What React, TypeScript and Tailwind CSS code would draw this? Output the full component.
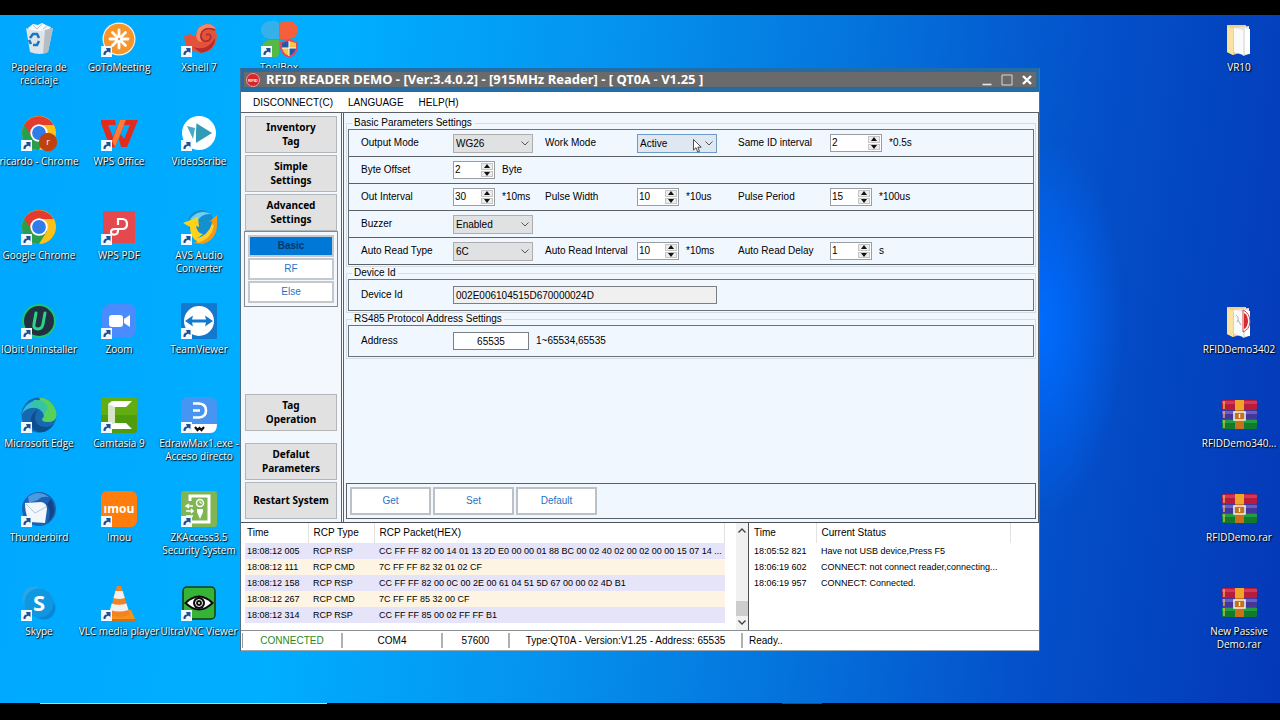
import { useState } from "react";
import type { ReactNode } from "react";

/* ---------- desktop icon drawings, all on a 36 x 36 grid ---------- */

const RecycleBin = () => (
  <>
    <path d="M7 7 L12 3 L17 4 L21 2 L27 5 L30 6 L28 10 L8 10Z" fill="#f5f7f8" />
    <path d="M12 4 L16 8 L21 3 M22 8 L26 5" stroke="#b9c2c8" fill="none" />
    <path d="M5 7 L9 31 Q19 35 27 31 L32 7 L26 9 L18 10 L10 9Z" fill="#dfe4e8" />
    <path d="M24 9 L32 7 L27 31 L22 33Z" fill="#b5bcc2" />
    <path d="M9 17 l3 -4 h4 l2 4 M18 20 l-2 4 h-4 M10 23 l-2 -4" stroke="#1778c8" strokeWidth="2.6" fill="none" />
  </>
);

const GoToMeeting = () => (
  <>
    <circle cx="18" cy="18" r="16.5" fill="#f9f3e6" />
    <circle cx="18" cy="18" r="15.3" fill="#f7952a" />
    <g stroke="#fff" strokeWidth="2.8" strokeLinecap="round">
      <path d="M18 9v6M18 21v6M9 18h6M21 18h6M11.500 11.500l4 4M20.500 20.500l4 4M24.500 11.500l-4 4M15.500 20.500l-4 4" />
    </g>
    <circle cx="18" cy="18" r="2.4" fill="#fff" />
    <circle cx="18" cy="18" r="1.2" fill="#f7952a" />
  </>
);

const Xshell = () => (
  <>
    <path d="M3 15 L9 13 Q13 16 15 14 Q16 4 26 3 Q32 3 35 8 Q34 9 34 12 L36 13 Q36 25 28 30 Q19 34 10 29 Q4 27 3 15Z" fill="#e4523b" />
    <path d="M15 15 Q16 4 26 3 Q32 3 35 8 Q26 5 21 10 Q17 15 21 21 Q16 21 15 15Z" fill="#f08a62" />
    <path d="M34 9 Q25 5 21 11 Q18 17 23 20 Q29 21 30 16 Q29 12 25 14" fill="none" stroke="#a92d2c" strokeWidth="1.500" />
    <path d="M12 26 Q26 31 34 17 Q34 29 20 32Z" fill="#b82c2c" />
  </>
);

const ToolBox = () => (
  <>
    <path d="M9 0 h5 q4 0 4 4 v14 h-9 a9 9 0 0 1 0 -18z" fill="#35b1ea" />
    <path d="M28 0 h-5 q-4 0 -4 4 v14 h9 a9 9 0 0 0 0 -18z" fill="#f4603c" />
    <path d="M9 36 h5 q4 0 4 -4 v-13 h-9 a8.500 8.500 0 0 0 0 17z" fill="#55b945" />
    <path d="M28 18 l9 3 v6 q-1 7 -9 10 q-8 -3 -9 -10 v-6z" fill="#e04a60" />
    <path d="M28 20 l-7 2 v5 h7z M28 27 h7 q-1 5 -7 8z" fill="#2159a8" />
    <path d="M28 20 l7 2 v5 h-7z M28 27 h-7 q1 5 7 8z" fill="#f8c443" />
    <path d="M28 20v15M21 27h14" stroke="#fff" />
  </>
);

const ChromeMark = () => (
  <>
    <circle cx="18" cy="18" r="17" fill="#fbc116" />
    <path d="M18 18 L3.300 9.500 A17 17 0 0 0 18 35 L26 22Z" fill="#2a9e4b" />
    <path d="M18 10 H32.700 A17 17 0 0 0 3.300 9.500 L11 22Z" fill="#e33b2e" />
    <circle cx="18" cy="18" r="8.700" fill="#fff" />
    <circle cx="18" cy="18" r="6.900" fill="#2f7de9" />
  </>
);

const ChromeProfile = () => (
  <>
    <ChromeMark />
    <circle cx="27" cy="27" r="9.200" fill="#c0410b" />
    <text x="27" y="30" fontSize="9" textAnchor="middle" fill="#fff" fontFamily="Open Sans, sans-serif">r</text>
  </>
);

const WpsOffice = () => (
  <>
    <path d="M0 5 H14 L15 10 H7 L12 22 L19 5 H25 L14 32 H9 L0 8Z" fill="#e22a1d" />
    <path d="M19 5 H25 L14 32 L11 26Z" fill="#ff7a35" />
    <path d="M25 5 H37 L26 32 H20 L18 24 L20 19 L23 24 L29 10 H23Z" fill="#e22a1d" />
  </>
);

const VideoScribe = () => (
  <>
    <circle cx="18" cy="18" r="17" fill="#fff" />
    <path d="M15 8 L31 18 L15 28Z" fill="#2f9bb5" />
    <path d="M6 11 L14 13 L12 24Z" fill="#46abc0" />
    <path d="M15 8 L14 25 L12 29" stroke="#fff" fill="none" />
  </>
);

const WpsPdf = () => (
  <>
    <rect x="2" y="2" width="32" height="32" fill="#e5484d" />
    <path d="M17 16 V10 h4 q5 0 5 5 t-5 5 h-7 q-4 0 -4 3 q0 3 4 2.500 q3 -.5 3 -4 v-2" stroke="#fff" strokeWidth="2.200" fill="none" />
  </>
);

const AvsAudio = () => (
  <>
    <circle cx="20" cy="14" r="13" fill="#1390cf" />
    <path d="M9 10 Q18 -1 30 5 Q20 4 15 14Z" fill="#6fd0f5" />
    <path d="M2 14 L17 8 L18 18 L15 17 Q16 24 22 25 L14 31 Q9 26 9 18Z" fill="#ffd21a" />
    <path d="M12 34 Q29 30 31 12 L28 13 L36 6 L36 13 Q37 30 22 35Z" fill="#f59a14" />
    <path d="M14 30 Q27 27 31 15 L33 17 Q30 30 17 34Z" fill="#ffcf2b" />
  </>
);

const IObit = () => (
  <>
    <circle cx="18" cy="18" r="17" fill="#1fc47c" />
    <circle cx="18" cy="18" r="15" fill="#23303f" />
    <path d="M15 10 L13 21 Q12 26 17 26 Q21 26 22 21 L24 10" stroke="#28d58a" strokeWidth="3" fill="none" strokeLinecap="round" />
  </>
);

const ZoomMark = () => (
  <>
    <rect x="1" y="1" width="34" height="34" rx="8" fill="#4a8cff" />
    <rect x="8" y="12" width="14" height="12" rx="3" fill="#fff" />
    <path d="M23 16 L29 12 V24 L23 20Z" fill="#fff" />
  </>
);

const TeamViewer = () => (
  <>
    <rect width="36" height="36" rx="1" fill="#1279cf" />
    <circle cx="18" cy="18" r="15" fill="#fff" />
    <path d="M4 18 L12 12.500 L11 16.500 H25 L24 12.500 L32 18 L24 23.500 L25 19.500 H11 L12 23.500Z" fill="#1279cf" />
  </>
);

const Edge = () => (
  <>
    <circle cx="18" cy="18" r="17.500" fill="#1668b0" />
    <path d="M1 17 A17.500 17.500 0 0 1 35.500 18 Q35 25 27 25 Q21 25 21 22 Q24 20 22 16 Q18 10 10 11 Q4 12 1 17Z" fill="#35b9d8" />
    <path d="M18 .5 A17.500 17.500 0 0 1 35.500 18 Q35 25 27 25 Q21 25 21 22 Q24 20 23 16 Q21 6 18 .5Z" fill="#55d15c" />
    <path d="M13 3 Q24 2 27 11 L23 17 Q20 9 9 11Z" fill="#37c4a4" />
    <path d="M14 20 Q14 30 26 30 Q30 30 33 27 Q26 37 17 35 Q9 32 10 22 Q11 15 17 13 Q14 16 14 20Z" fill="#0b4f8f" />
  </>
);

const Camtasia = () => (
  <>
    <rect width="36" height="36" rx="3" fill="#4f9c0c" />
    <path d="M0 3 Q0 0 3 0 H33 Q36 0 36 3 V18 H0Z" fill="#62ad12" />
    <path d="M7 7 L11 4 H31 L25 10 H14 V26 H25 L31 32 H11 L7 29Z" fill="#fff" />
    <path d="M7 7 L14 10 V26 L7 29Z" fill="#d8e6c8" />
  </>
);

const EdrawMax = () => (
  <>
    <rect width="36" height="36" rx="7" fill="#4795f2" />
    <path d="M0 27 L36 27 Q36 36 29 36 H7 Q0 36 0 29Z" fill="#fff" />
    <path d="M12 6.500 H18 Q25 7 25 13.500 Q25 20 18 20.500 H12 M12 13.500 H19" stroke="#fff" strokeWidth="2.600" fill="none" />
    <path d="M14 30 l2.500 3 l2 -2 l2 2 l2.500 -3" stroke="#111" strokeWidth="2.200" fill="none" />
  </>
);

const Thunderbird = () => (
  <>
    <circle cx="18" cy="18" r="17" fill="#1c62b4" />
    <path d="M7 6 Q17 -2 28 6 Q20 5 17 9 L8 12Z" fill="#4b9bdd" />
    <path d="M30 8 Q38 21 27 31 Q31 22 26 13Z" fill="#134488" />
    <path d="M4 12 L20 11 Q26 12 26 18 L24 32 L9 31 Q4 24 4 12Z" fill="#f3f7fb" />
    <path d="M5 13 L14 22 L25 16" stroke="#b4c5d8" fill="none" />
  </>
);

const Imou = () => (
  <>
    <rect width="36" height="36" rx="6" fill="#ff7d0c" />
    <text x="18" y="22" fontSize="12" fontWeight="700" textAnchor="middle" fill="#fff" fontFamily="Open Sans, sans-serif">ımou</text>
  </>
);

const ZkAccess = () => (
  <>
    <rect width="36" height="36" rx="3" fill="#7fb552" />
    <path d="M9 10 V5 H28 V31 H9 V27" stroke="#fff" strokeWidth="3" fill="none" />
    <circle cx="19" cy="12" r="3.500" stroke="#fff" strokeWidth="1.500" fill="none" />
    <path d="M19 10v2h2" stroke="#fff" fill="none" />
    <path d="M16 18 h6 v3 l-3 7 l-3 -7z" fill="#fff" />
    <path d="M12 15 H5 M8 13l-3 2 3 2 M5 20 h7 M10 18l2 2 -2 2 M12 25 H5" stroke="#fff" strokeWidth="1.500" fill="none" />
  </>
);

const Skype = () => (
  <>
    <circle cx="13" cy="13" r="11.500" fill="#2aa5e8" />
    <circle cx="23" cy="23" r="11.500" fill="#0a86d8" />
    <circle cx="18" cy="18" r="14.500" fill="#0f97e2" />
    <text x="18" y="26" fontSize="22" fontWeight="700" textAnchor="middle" fill="#fff" fontFamily="Open Sans, sans-serif">S</text>
  </>
);

const Vlc = () => (
  <>
    <path d="M6 25 H30 L34 34 H3Z" fill="#f6921e" />
    <path d="M3 34 H34 V36 H3Z" fill="#d5700a" />
    <path d="M16 1 H20 L29 30 Q18 34 8 30Z" fill="#f4831f" />
    <path d="M14.400 6 H21.600 L23.800 13 Q18 15 12.400 13Z" fill="#eef0f1" />
    <path d="M10.700 18.500 Q18 21 25.400 18.500 L27.500 25 Q18 28 9 25Z" fill="#eef0f1" />
  </>
);

const UltraVnc = () => (
  <>
    <rect x="2" y="2" width="32" height="32" rx="4" fill="#35b435" stroke="#143c14" strokeWidth="1.500" />
    <path d="M3 18 Q18 3 33 18 Q18 33 3 18Z" fill="#0b0b0b" />
    <path d="M6 18 Q18 7 30 18 Q18 29 6 18Z" fill="#fff" />
    <circle cx="18" cy="18" r="6" fill="#0b0b0b" />
    <circle cx="18" cy="18" r="3.500" fill="none" stroke="#fff" />
    <circle cx="18" cy="18" r="1" fill="#fff" />
  </>
);

const Folder = () => (
  <>
    <path d="M6 4 H25 V30 L12 34 L6 31Z" fill="#f3d083" />
    <path d="M12 7 L28 5 V33 L22 35Z" fill="#e3e5e6" />
    <path d="M24 7 L29 8 V33 H24Z" fill="#fff" />
    <path d="M13 7 L22 9 V34 L13 31Z" fill="#f9fafa" />
    <path d="M6 5 L12 8 V34 L6 31Z" fill="#fbe2a0" />
  </>
);

const FolderDisc = () => (
  <>
    <Folder />
    <path d="M22 7 Q29 10 29 19 Q28 27 22 29Z" fill="#fff" stroke="#d8474c" />
    <path d="M23 10 Q27 12 27 19 Q26 25 23 26Z" fill="#d42a35" />
    <path d="M15 12 q4 3 1 7 M17 17 l3 5" stroke="#aab0b5" fill="none" />
  </>
);

const WinRar = () => (
  <>
    <rect x="1" y="3" width="35" height="10" rx="1.500" fill="#b81c3a" />
    <rect x="1" y="4" width="35" height="3" fill="#d2385a" />
    <rect x="1" y="13" width="35" height="9" rx="1.500" fill="#43379a" />
    <rect x="1" y="14" width="35" height="3" fill="#6a5ec4" />
    <rect x="1" y="22" width="35" height="10" rx="1.500" fill="#127a2c" />
    <rect x="1" y="23" width="35" height="3" fill="#249c42" />
    <path d="M3 4v8M3 14v7M3 23v8" stroke="#f1c95a" strokeWidth="1.200" />
    <rect x="14" y="3" width="9" height="11" fill="#eda52a" />
    <rect x="14" y="13" width="9" height="19" fill="#c9701a" />
    <path d="M13 15 H24 V23 H13Z" fill="none" stroke="#f5f2e6" strokeWidth="1.600" />
    <path d="M18.500 17 V21" stroke="#f5f2e6" strokeWidth="1.400" />
  </>
);

type DesktopItem = { label: string; art: ReactNode; shortcut?: boolean; place: string };

const leftItems: DesktopItem[] = [
  { label: "Papelera de\nreciclaje", art: <RecycleBin />, place: "col-start-1 row-start-1" },
  { label: "GoToMeeting", art: <GoToMeeting />, shortcut: true, place: "col-start-2 row-start-1" },
  { label: "Xshell 7", art: <Xshell />, shortcut: true, place: "col-start-3 row-start-1" },
  { label: "ToolBox", art: <ToolBox />, shortcut: true, place: "col-start-4 row-start-1" },
  { label: "ricardo - Chrome", art: <ChromeProfile />, shortcut: true, place: "col-start-1 row-start-2" },
  { label: "WPS Office", art: <WpsOffice />, shortcut: true, place: "col-start-2 row-start-2" },
  { label: "VideoScribe", art: <VideoScribe />, shortcut: true, place: "col-start-3 row-start-2" },
  { label: "Google Chrome", art: <ChromeMark />, shortcut: true, place: "col-start-1 row-start-3" },
  { label: "WPS PDF", art: <WpsPdf />, shortcut: true, place: "col-start-2 row-start-3" },
  { label: "AVS Audio\nConverter", art: <AvsAudio />, shortcut: true, place: "col-start-3 row-start-3" },
  { label: "IObit Uninstaller", art: <IObit />, shortcut: true, place: "col-start-1 row-start-4" },
  { label: "Zoom", art: <ZoomMark />, shortcut: true, place: "col-start-2 row-start-4" },
  { label: "TeamViewer", art: <TeamViewer />, shortcut: true, place: "col-start-3 row-start-4" },
  { label: "Microsoft Edge", art: <Edge />, shortcut: true, place: "col-start-1 row-start-5" },
  { label: "Camtasia 9", art: <Camtasia />, shortcut: true, place: "col-start-2 row-start-5" },
  { label: "EdrawMax1.exe -\nAcceso directo", art: <EdrawMax />, shortcut: true, place: "col-start-3 row-start-5" },
  { label: "Thunderbird", art: <Thunderbird />, shortcut: true, place: "col-start-1 row-start-6" },
  { label: "Imou", art: <Imou />, shortcut: true, place: "col-start-2 row-start-6" },
  { label: "ZKAccess3.5\nSecurity System", art: <ZkAccess />, shortcut: true, place: "col-start-3 row-start-6" },
  { label: "Skype", art: <Skype />, shortcut: true, place: "col-start-1 row-start-7" },
  { label: "VLC media player", art: <Vlc />, shortcut: true, place: "col-start-2 row-start-7" },
  { label: "UltraVNC Viewer", art: <UltraVnc />, shortcut: true, place: "col-start-3 row-start-7" },
];

const rightItems: DesktopItem[] = [
  { label: "VR10", art: <Folder />, place: "row-start-1" },
  { label: "RFIDDemo3402", art: <FolderDisc />, place: "row-start-4" },
  { label: "RFIDDemo340...", art: <WinRar />, place: "row-start-5" },
  { label: "RFIDDemo.rar", art: <WinRar />, place: "row-start-6" },
  { label: "New Passive\nDemo.rar", art: <WinRar />, place: "row-start-7" },
];

function DesktopIcon({ label, art, shortcut, place }: DesktopItem) {
  return (
    <button type="button" className={`flex flex-col items-center gap-1 ${place}`}>
      <svg viewBox="0 0 36 36" className="h-9 w-9 shrink-0 overflow-visible" aria-hidden="true">
        {art}
        {shortcut && (
          <g>
            <rect x="0" y="25" width="11" height="11" fill="#f4f7fa" />
            <path d="M2.500 34 Q2 29.500 6 29.500 L5 27 L9.500 27 L9.500 32 L7.700 30.700 Q4.500 31 4.500 34Z" fill="#1d4f95" />
          </g>
        )}
      </svg>
      <span className="text-center font-['Open_Sans',sans-serif] text-[10px] leading-[13px] whitespace-pre text-white [text-shadow:1px_1px_1px_#000,0_0_2px_#000c]">
        {label}
      </span>
    </button>
  );
}

/* ---------- form controls ---------- */

function Dropdown({ id, value, active }: { id: string; value: string; active?: boolean }) {
  return (
    <div className="relative w-20">
      <select
        id={id}
        defaultValue={value}
        className={`block h-[19px] w-full appearance-none border px-0.5 text-[10px] leading-[17px] ${
          active ? "border-[#6f9bc9] bg-[#dfe7f1]" : "border-[#adadad] bg-[#e0e1e3]"
        }`}
      >
        <option>{value}</option>
      </select>
      <svg viewBox="0 0 8 5" className="pointer-events-none absolute top-[7px] right-1 h-[5px] w-2" aria-hidden="true">
        <path d="M.5 .5 L4 4 L7.500 .5" fill="none" stroke="#555" />
      </svg>
    </div>
  );
}

function Spinner({ id, initial, wide }: { id: string; initial: number; wide?: boolean }) {
  const [value, setValue] = useState(initial);
  const step = "flex flex-1 items-center justify-center border border-[#c6c6c6] bg-[#ececec]";
  return (
    <div className={`flex h-[18px] border border-[#9a9da1] bg-white ${wide ? "w-[52px]" : "w-[42px]"}`}>
      <input
        id={id}
        type="text"
        inputMode="numeric"
        value={value}
        onChange={(e) => setValue(Number(e.target.value) || 0)}
        className="h-4 w-0 min-w-0 flex-1 pl-px text-[10px] leading-4 outline-none"
      />
      <div className="flex w-[13px] flex-col gap-px bg-white py-px pr-px">
        <button type="button" aria-label="Increase" onClick={() => setValue(value + 1)} className={step}>
          <svg viewBox="0 0 6 4" className="h-1 w-1.5" aria-hidden="true"><path d="M3 0 L6 4 H0Z" fill="#111" /></svg>
        </button>
        <button type="button" aria-label="Decrease" onClick={() => setValue(Math.max(0, value - 1))} className={step}>
          <svg viewBox="0 0 6 4" className="h-1 w-1.5" aria-hidden="true"><path d="M0 0 H6 L3 4Z" fill="#111" /></svg>
        </button>
      </div>
    </div>
  );
}

function Field({ id, label, unit, children }: { id: string; label: string; unit?: string; children: ReactNode }) {
  return (
    <div className="flex items-center">
      <label htmlFor={id} className="w-[92px] shrink-0">{label}</label>
      {children}
      {unit && <span className="pl-[7px]">{unit}</span>}
    </div>
  );
}

function Row({ children }: { children: ReactNode }) {
  return (
    <div className="grid h-[27px] grid-cols-[184px_193px_1fr] items-center border-b border-[#5c6166] pl-3">{children}</div>
  );
}

function Group({ title, children }: { title: string; children: ReactNode }) {
  return (
    <fieldset className="min-w-0 border border-[#d3dde6] px-px pb-px">
      <legend className="ml-1 px-0.5 leading-3">{title}</legend>
      <div className="border border-b-0 border-[#6d7276]">{children}</div>
    </fieldset>
  );
}

const sideButton =
  "flex h-[37px] shrink-0 items-center justify-center border border-[#b3b6b9] bg-[#e1e1e1] pb-0.5 text-center font-['Noto_Sans',sans-serif] text-[10px] leading-[14px] font-bold whitespace-pre text-black";
const subButton = "h-[22px] border-2 border-[#c5c9ce] text-[10px] leading-4";
const actionButton = "h-7 w-[81px] border-2 border-[#bcc1c6] bg-white text-[10px] text-[#1f74c4]";

const packets = [
  ["18:08:12 005", "RCP RSP", "CC FF FF 82 00 14 01 13 2D E0 00 00 01 88 BC 00 02 40 02 00 02 00 00 15 07 14 ..."],
  ["18:08:12 111", "RCP CMD", "7C FF FF 82 32 01 02 CF"],
  ["18:08:12 158", "RCP RSP", "CC FF FF 82 00 0C 00 2E 00 61 04 51 5D 67 00 00 02 4D B1"],
  ["18:08:12 267", "RCP CMD", "7C FF FF 85 32 00 CF"],
  ["18:08:12 314", "RCP RSP", "CC FF FF 85 00 02 FF FF B1"],
];

const statuses = [
  ["18:05:52 821", "Have not USB device,Press F5"],
  ["18:06:19 602", "CONNECT: not connect reader,connecting..."],
  ["18:06:19 957", "CONNECT: Connected."],
];

function ReaderWindow() {
  return (
    <section className="absolute top-[53px] left-60 flex w-[800px] flex-col border-x border-[#4c6f8a] bg-white font-['Liberation_Sans',sans-serif] text-[10px] leading-[14px] text-black">
      <header className="flex h-6 bg-[#236ca6] px-[3px] pt-1 pb-[5px]">
        <div className="flex flex-1 items-center bg-[#6a6a6a] pl-0.5">
          <svg viewBox="0 0 14 14" className="h-3.5 w-3.5" aria-hidden="true">
            <circle cx="7" cy="7" r="6.500" fill="#d9262c" stroke="#f19a96" />
            <text x="7" y="8.500" fontSize="4" fontWeight="700" textAnchor="middle" fill="#fff">RFID</text>
          </svg>
          <h1 className="flex-1 pl-1.5 font-['Noto_Sans',sans-serif] text-[13px] leading-[15px] font-bold whitespace-nowrap text-white">
            RFID READER DEMO - [Ver:3.4.0.2] - [915MHz Reader] - [ QT0A - V1.25 ]
          </h1>
          <div className="flex gap-1.5 pr-0.5">
            <button type="button" aria-label="Minimize">
              <svg viewBox="0 0 14 14" className="h-3.5 w-3.5"><path d="M2.500 11.500h9" stroke="#e8e8e8" strokeWidth="1.600" /></svg>
            </button>
            <button type="button" aria-label="Maximize">
              <svg viewBox="0 0 14 14" className="h-3.5 w-3.5"><path d="M2 2h10v10H2z" stroke="#d8d8d8" fill="none" /></svg>
            </button>
            <button type="button" aria-label="Close">
              <svg viewBox="0 0 14 14" className="h-3.5 w-3.5"><path d="M3 3l8 8M11 3l-8 8" stroke="#fff" strokeWidth="2.400" /></svg>
            </button>
          </div>
        </div>
      </header>

      <nav className="flex h-[21px] items-center gap-[15px] border-b border-[#5c6166] px-3 pt-0.5">
        <button type="button">DISCONNECT(C)</button>
        <button type="button">LANGUAGE</button>
        <button type="button">HELP(H)</button>
      </nav>

      <div className="flex h-[410px] border-b border-[#4d5256]">
        <aside className="flex w-[101px] flex-col border-r border-[#5c6166] bg-[#f3f7fe] p-[3px]">
          <div className="flex flex-col gap-0.5 px-px">
            <button type="button" className={sideButton}>{"Inventory\nTag"}</button>
            <button type="button" className={sideButton}>{"Simple\nSettings"}</button>
            <button type="button" className={sideButton}>{"Advanced\nSettings"}</button>
          </div>
          <div className="flex flex-col gap-px border border-[#85898d] p-[3px]">
            <button type="button" className={`${subButton} bg-[#0078d7] font-bold text-[#0a3767]`}>Basic</button>
            <button type="button" className={`${subButton} bg-white text-[#1f74c4]`}>RF</button>
            <button type="button" className={`${subButton} bg-white text-[#1f74c4]`}>Else</button>
          </div>
          <div className="mt-auto flex flex-col px-px">
            <button type="button" className={`${sideButton} mb-3`}>{"Tag\nOperation"}</button>
            <button type="button" className={`${sideButton} mb-0.5`}>{"Defalut\nParameters"}</button>
            <button type="button" className={sideButton}>Restart System</button>
          </div>
        </aside>

        <main className="ml-px flex flex-1 flex-col border-x border-[#5c6166] bg-[#f0f7ff] px-0.5 pt-1 pb-[3px]">
          <div className="flex flex-col">
            <Group title="Basic Parameters Settings">
              <Row>
                <Field id="output" label="Output Mode"><Dropdown id="output" value="WG26" /></Field>
                <Field id="work" label="Work Mode"><Dropdown id="work" value="Active" active /></Field>
                <Field id="same" label="Same ID interval" unit="*0.5s"><Spinner id="same" initial={2} wide /></Field>
              </Row>
              <Row>
                <Field id="offset" label="Byte Offset" unit="Byte"><Spinner id="offset" initial={2} /></Field>
              </Row>
              <Row>
                <Field id="out" label="Out Interval" unit="*10ms"><Spinner id="out" initial={30} /></Field>
                <Field id="width" label="Pulse Width" unit="*10us"><Spinner id="width" initial={10} /></Field>
                <Field id="period" label="Pulse Period" unit="*100us"><Spinner id="period" initial={15} /></Field>
              </Row>
              <Row>
                <Field id="buzzer" label="Buzzer"><Dropdown id="buzzer" value="Enabled" /></Field>
              </Row>
              <Row>
                <Field id="autotype" label="Auto Read Type"><Dropdown id="autotype" value="6C" /></Field>
                <Field id="autoint" label="Auto Read Interval" unit="*10ms"><Spinner id="autoint" initial={10} /></Field>
                <Field id="autodelay" label="Auto Read Delay" unit="s"><Spinner id="autodelay" initial={1} /></Field>
              </Row>
            </Group>
            <Group title="Device Id">
              <div className="flex h-[31px] items-center border-b border-[#6d7276] pl-3">
                <Field id="device" label="Device Id">
                  <input id="device" readOnly defaultValue="002E006104515D670000024D" className="h-[18px] w-[264px] border border-[#7a7f84] bg-[#f0f0f0] px-0.5 text-[10px] outline-none" />
                </Field>
              </div>
            </Group>
            <Group title="RS485 Protocol Address Settings">
              <div className="flex h-[31px] items-center border-b border-[#6d7276] pl-3">
                <Field id="address" label="Address" unit="1~65534,65535">
                  <input id="address" defaultValue="65535" className="h-[18px] w-[76px] border border-[#7a7f84] bg-white text-center text-[10px] outline-none" />
                </Field>
              </div>
            </Group>
          </div>
          <div className="mt-auto flex gap-0.5 border border-[#5c6166] p-[3px]">
            <button type="button" className={actionButton}>Get</button>
            <button type="button" className={actionButton}>Set</button>
            <button type="button" className={actionButton}>Default</button>
          </div>
        </main>
      </div>

      <div className="flex h-[108px] border-b border-[#8a8f93]">
        <div className="flex w-[508px] justify-between border-r border-[#4d5256] pl-1">
          <table className="h-fit w-[480px] table-fixed border-collapse whitespace-nowrap">
            <thead>
              <tr className="h-5 text-left">
                <th className="w-[63px] border-r border-[#e2e2e2] p-0 pl-0.5 font-normal">Time</th>
                <th className="w-[66px] border-r border-[#e2e2e2] p-0 pl-[5px] font-normal">RCP Type</th>
                <th className="border-r border-[#e2e2e2] p-0 pl-[5px] font-normal">RCP Packet(HEX)</th>
              </tr>
            </thead>
            <tbody className="text-[9px]">
              {packets.map(([time, type, hex]) => (
                <tr key={time} className="h-4 odd:bg-[#e6e4f8] even:bg-[#fdf4e3]">
                  <td className="p-0 pl-0.5">{time}</td>
                  <td className="p-0 pl-[5px]">{type}</td>
                  <td className="p-0 pl-[5px]">{hex}</td>
                </tr>
              ))}
            </tbody>
          </table>
          <div className="flex w-3 flex-col items-center justify-between bg-[#f1f1f1] py-[5px]" aria-hidden="true">
            <svg viewBox="0 0 8 5" className="h-[5px] w-2"><path d="M.5 4.500 L4 1 L7.500 4.500" stroke="#444" strokeWidth="1.400" fill="none" /></svg>
            <div className="mt-auto mb-1 h-[15px] w-full bg-[#cdcdcd]" />
            <svg viewBox="0 0 8 5" className="h-[5px] w-2"><path d="M.5 .5 L4 4 L7.500 .5" stroke="#444" strokeWidth="1.400" fill="none" /></svg>
          </div>
        </div>
        <table className="h-fit w-[262px] table-fixed border-collapse whitespace-nowrap">
          <thead>
            <tr className="h-5 text-left">
              <th className="w-[67px] border-r border-[#e2e2e2] p-0 pl-[5px] font-normal">Time</th>
              <th className="border-r border-[#e2e2e2] p-0 pl-[5px] font-normal">Current Status</th>
            </tr>
          </thead>
          <tbody className="text-[9px]">
            {statuses.map(([time, text]) => (
              <tr key={time} className="h-4">
                <td className="p-0 pl-[5px]">{time}</td>
                <td className="p-0 pl-[5px]">{text}</td>
              </tr>
            ))}
          </tbody>
        </table>
      </div>

      <footer className="flex h-5 items-stretch border-b border-[#9aa3aa] py-0.5 pl-px text-center leading-4">
        <span className="w-[99px] border-l border-[#9a9a9a] text-[#1f8a24]">CONNECTED</span>
        <span className="w-[100px] border-l-2 border-[#b0b0b0]">COM4</span>
        <span className="w-[67px] border-l-2 border-[#b0b0b0]">57600</span>
        <span className="w-[233px] border-l-2 border-[#b0b0b0]">Type:QT0A - Version:V1.25 - Address: 65535</span>
        <span className="flex-1 border-l-2 border-[#b0b0b0] pl-1.5 text-left">Ready..</span>
      </footer>
    </section>
  );
}

export default function App() {
  return (
    <div className="flex min-h-screen flex-col bg-black pt-[15px]">
      <div className="relative flex flex-1 justify-between overflow-hidden bg-[radial-gradient(ellipse_85px_190px_at_1040px_310px,#006cff_0%,#006cffaa_35%,#006cff00_100%),linear-gradient(97deg,#00a8ff_0%,#00aeff_25%,#0592ee_46%,#0474dc_63%,#0452cb_80%,#0345c0_90%,#0538b8_100%)] pt-1.5">
        <div className="-ml-px grid auto-rows-[94px] grid-cols-[repeat(4,80px)]">
          {leftItems.map((item) => (
            <DesktopIcon key={item.label} {...item} />
          ))}
        </div>
        <div className="mr-px grid auto-rows-[94px] grid-cols-[80px]">
          {rightItems.map((item) => (
            <DesktopIcon key={item.label} {...item} />
          ))}
        </div>
        <ReaderWindow />
        <svg viewBox="0 0 9 14" className="pointer-events-none absolute top-[124px] left-[693px] h-3.5 w-[9px]" aria-hidden="true">
          <path d="M.5 .5 V11 L3 8.700 L4.800 13 L6.500 12.300 L4.800 8.200 H8.200Z" fill="#fff" stroke="#222" strokeWidth=".8" />
        </svg>
      </div>
      <div className="flex h-[17px] items-start">
        <div className="ml-10 h-px w-[287px] bg-[#9fe0fb]" />
        <div className="ml-[455px] h-px w-10 bg-[#1d4f7c]" />
      </div>
    </div>
  );
}
